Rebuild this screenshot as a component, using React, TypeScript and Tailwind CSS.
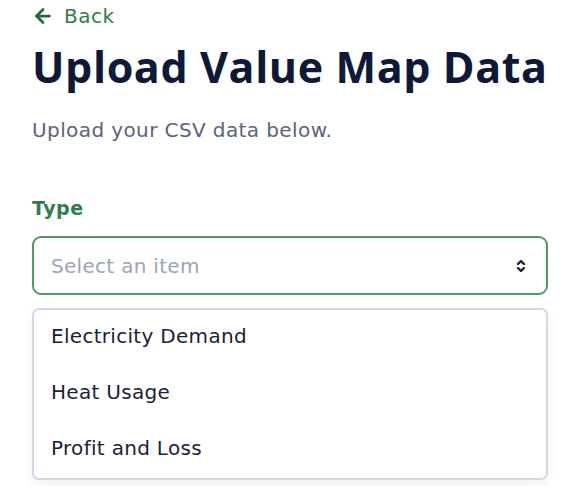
import { ArrowLeft } from "lucide-react"

const items = ["Electricity Demand", "Heat Usage", "Profit and Loss"]

function UpDown() {
  return (
    <svg width="10" height="14" viewBox="0 0 10 14" fill="none" stroke="#1a1f36" strokeWidth="2.4" strokeLinecap="round" strokeLinejoin="round">
      <path d="M2 5l3-3 3 3" />
      <path d="M2 9l3 3 3-3" />
    </svg>
  )
}

export default function App() {
  return (
    <div className="min-h-screen bg-white px-8 font-['DejaVu_Sans',sans-serif]">
      {/* Back link */}
      <a href="#" className="flex items-center gap-2.5 pt-[3px] text-[20px] leading-[26px] tracking-[0.5px] text-[#2f7d4c]">
        <ArrowLeft size={22} strokeWidth={3} className="text-[#1f6b3a]" />
        <span>Back</span>
      </a>

      <h1 className="mt-[10px] whitespace-nowrap font-['Open_Sans',sans-serif] text-[43px] font-bold leading-[56px] tracking-[0.6px] text-[#0e1838]">
        Upload Value Map Data
      </h1>

      <p className="mt-[23px] text-[20px] leading-[24px] tracking-[0.4px] text-[#5a6479]">
        Upload your CSV data below.
      </p>

      {/* Type select */}
      <div className="mt-[54px]">
        <label className="block text-[19px] font-bold leading-[24px] tracking-[0.5px] text-[#2f7d4c]">Type</label>
        <div className="mt-[16px] flex h-[59px] w-[516px] items-center justify-between rounded-[9px] border-2 border-[#4f9a6a] pl-[17px] pr-[20px]">
          <span className="text-[20px] tracking-[0.3px] text-[#9ba4b8]">Select an item</span>
          <UpDown />
        </div>

        <ul className="mt-[13px] w-[516px] rounded-[7px] border-2 border-[#d3d9e4] bg-white shadow-[0_4px_12px_rgba(0,0,0,0.06)]">
          {items.map((it) => (
            <li key={it} className="flex h-[56px] items-center px-[17px] pb-[4px] text-[20px] tracking-[0.3px] text-[#1c2236]">
              {it}
            </li>
          ))}
        </ul>
      </div>
    </div>
  )
}
